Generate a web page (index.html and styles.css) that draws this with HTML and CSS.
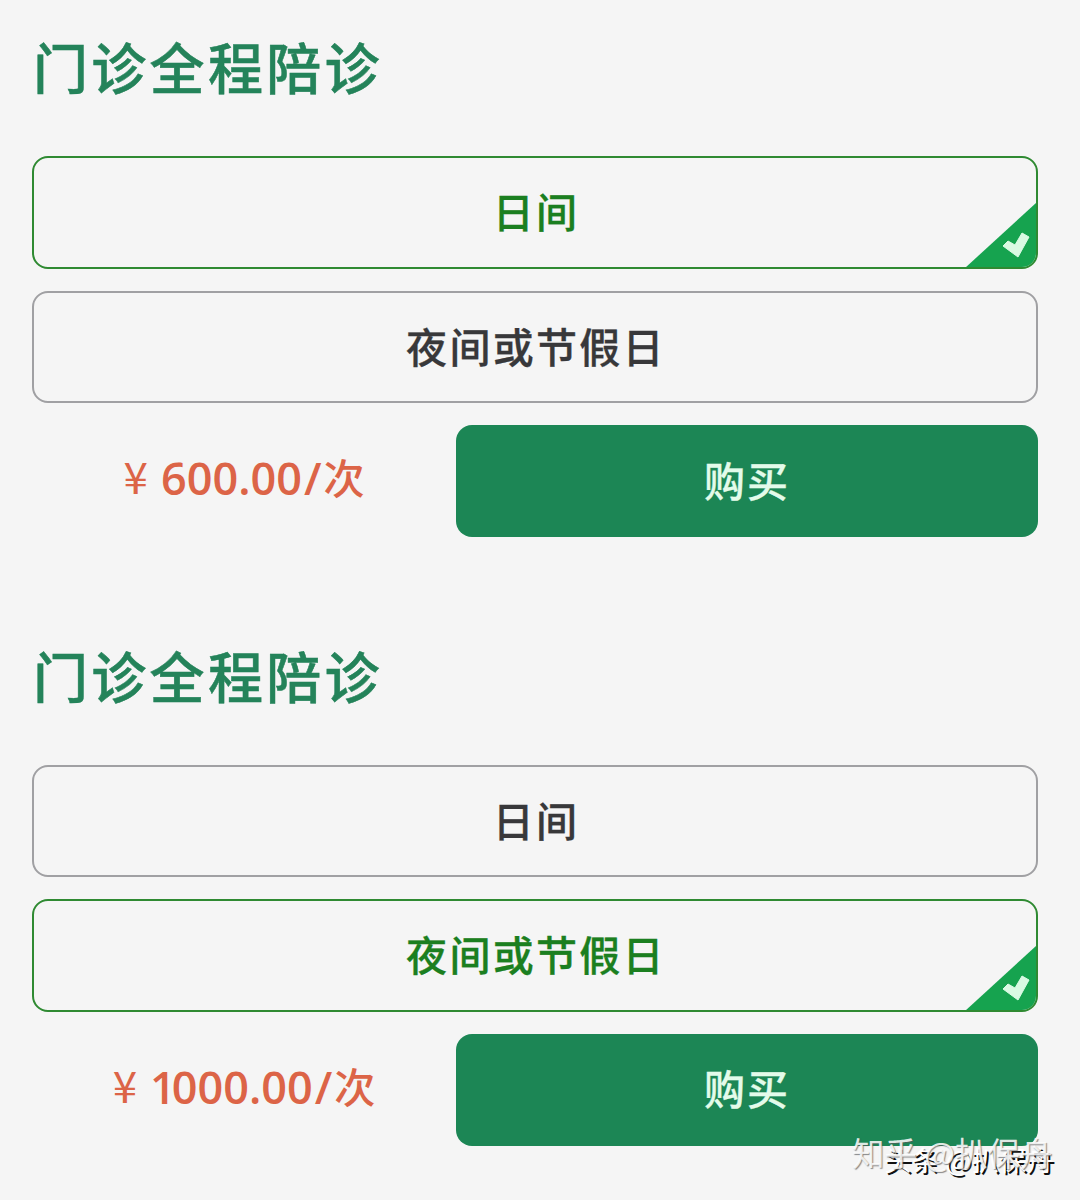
FILE: index.html
```html
<!DOCTYPE html>
<html lang="zh-CN">
<head>
<meta charset="utf-8">
<title>门诊全程陪诊</title>
<link rel="stylesheet" href="styles.css">
</head>
<body>
<main class="page">
  <section class="service">
    <h1 class="title">门诊全程陪诊</h1>
    <div class="options">
      <div class="option selected"><span>日间</span>
        <svg class="tick" viewBox="0 0 72 66"><path class="corner" d="M72 0V66H0Z"/><path class="check" d="M38 44L43 39L50 43L57 31L64 35L53 55Z"/></svg>
      </div>
      <div class="option"><span>夜间或节假日</span></div>
    </div>
    <div class="purchase">
      <div class="price"><span class="yen">¥</span><span class="amount">600.00<span class="slash">/</span></span><span class="unit">次</span></div>
      <button class="buy">购买</button>
    </div>
  </section>
  <section class="service">
    <h1 class="title">门诊全程陪诊</h1>
    <div class="options">
      <div class="option"><span>日间</span></div>
      <div class="option selected"><span>夜间或节假日</span>
        <svg class="tick" viewBox="0 0 72 66"><path class="corner" d="M72 0V66H0Z"/><path class="check" d="M38 44L43 39L50 43L57 31L64 35L53 55Z"/></svg>
      </div>
    </div>
    <div class="purchase">
      <div class="price"><span class="yen">¥</span><span class="amount"><span class="one">1</span>000.00<span class="slash">/</span></span><span class="unit">次</span></div>
      <button class="buy">购买</button>
    </div>
  </section>
  <div class="mark mark-dark">头条 @扒保舟</div>
  <div class="mark mark-light">知乎 @扒保舟</div>
</main>
</body>
</html>
```
FILE: styles.css
```css
* { box-sizing: border-box; }
body {
  margin: 0;
  background: #f5f5f5;
  font-family: "Noto Sans CJK SC", sans-serif;
}
.page {
  position: relative;
  width: 1080px;
  height: 1200px;
  overflow: hidden;
}
.service {
  height: 608.5px;
  padding: 25px 42px 0 32px;
}
.title {
  margin: 0 0 51px;
  padding-left: 1px;
  height: 80px;
  line-height: 80px;
  font-size: 55px;
  font-weight: 500;
  letter-spacing: 3.3px;
  color: #24835a;
  -webkit-text-stroke: 0.5px currentColor;
}
.options {
  display: flex;
  flex-direction: column;
  gap: 22px;
}
.option {
  position: relative;
  display: flex;
  justify-content: center;
  height: 112.5px;
  padding-left: 2px;
  border: 2px solid #a0a0a3;
  border-radius: 16px;
  overflow: hidden;
  line-height: 104px;
  font-size: 41px;
  font-weight: 500;
  letter-spacing: 2.3px;
  color: #38383a;
  -webkit-text-stroke: 0.3px currentColor;
}
.selected {
  border-color: #2f8a32;
  color: #1b7f20;
}
.tick {
  position: absolute;
  right: -1px;
  bottom: -1px;
  width: 72px;
  height: 66px;
}
.corner { fill: #16a34f; }
.check {
  fill: #d9fae3;
  stroke: #d9fae3;
  stroke-width: 1px;
  stroke-linejoin: round;
}
.purchase {
  display: flex;
  margin-top: 22px;
  height: 112px;
}
.price {
  display: flex;
  justify-content: center;
  width: 424px;
  line-height: 105px;
  font-size: 41px;
  color: #dc6447;
}
.yen {
  margin-right: 13px;
  line-height: 101px;
  font-size: 44px;
}
.amount {
  font-family: "Open Sans", sans-serif;
  font-size: 45px;
  font-weight: 600;
  letter-spacing: 0;
}
.one { letter-spacing: -4px; }
.slash { margin-left: 2px; }
.unit {
  margin-left: 2px;
  line-height: 103px;
  font-weight: 500;
}
.buy {
  flex: 1;
  padding: 0 0 5px;
  border: 0;
  border-radius: 16px;
  background: #1c8655;
  color: #e3fbea;
  font-family: inherit;
  font-size: 41px;
  font-weight: 500;
  letter-spacing: 2px;
  -webkit-text-stroke: 0.3px currentColor;
}
.mark {
  position: absolute;
  white-space: nowrap;
  line-height: 40px;
  color: #fff;
}
.mark-dark {
  left: 884px;
  top: 1139px;
  font-size: 27.5px;
  text-shadow: 2px 2px 0 #111;
}
.mark-light {
  left: 852px;
  top: 1132px;
  font-size: 32.5px;
  color: rgba(255, 255, 255, 0.85);
  text-shadow: 1px 1px 1px rgba(90, 90, 90, 0.7);
}
```
